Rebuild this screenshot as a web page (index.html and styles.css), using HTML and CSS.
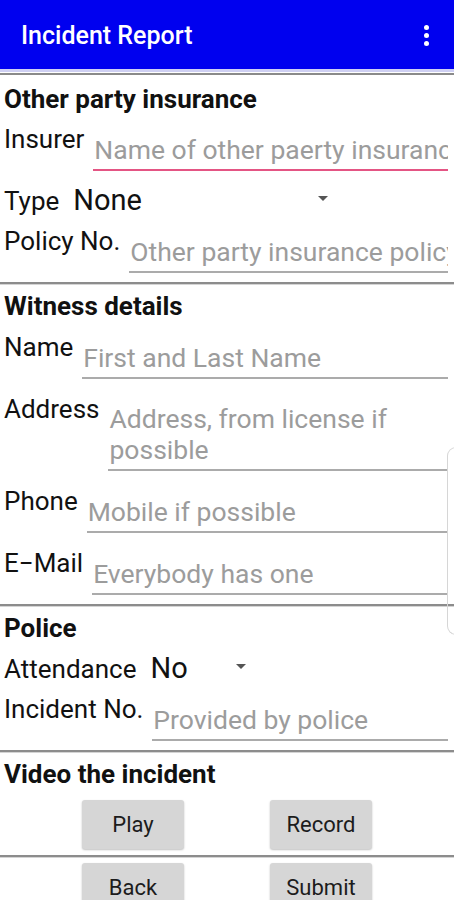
FILE: index.html
```html
<html>
	<head>
		<title>Incident Report</title>
		<meta name="viewport" content="width=device-width, initial-scale=1">
		<link rel="stylesheet" href="styles.css">
	</head>
	<body>

		<div class="appBar">
			<div class="appTitle">Incident Report</div>
			<div class="overflowMenu">
				<span class="dot"></span>
				<span class="dot"></span>
				<span class="dot"></span>
			</div>
		</div>
		<div class="barEdge"></div>

		<div class="section">
			<div class="heading">Other party insurance</div>
			<div class="row">
				<span class="label">Insurer</span>
				<input class="field focused" type="text" placeholder="Name of other paerty insurance company">
			</div>
			<div class="row spinRow">
				<span class="label">Type</span>
				<div class="spinner typeSpin">
					<span class="spinValue">None</span>
					<span class="arrow"></span>
				</div>
			</div>
			<div class="row last">
				<span class="label">Policy No.</span>
				<input class="field" type="text" placeholder="Other party insurance policy number">
			</div>
		</div>
		<div class="rule"></div>

		<div class="section">
			<div class="heading">Witness details</div>
			<div class="row">
				<span class="label">Name</span>
				<input class="field" type="text" placeholder="First and Last Name">
			</div>
			<div class="row">
				<span class="label">Address</span>
				<textarea class="field area" rows="2" placeholder="Address, from license if possible"></textarea>
			</div>
			<div class="row">
				<span class="label">Phone</span>
				<input class="field" type="text" placeholder="Mobile if possible">
			</div>
			<div class="row last">
				<span class="label">E&minus;Mail</span>
				<input class="field" type="text" placeholder="Everybody has one">
			</div>
		</div>
		<div class="rule"></div>

		<div class="section">
			<div class="heading">Police</div>
			<div class="row spinRow">
				<span class="label">Attendance</span>
				<div class="spinner attendSpin">
					<span class="spinValue">No</span>
					<span class="arrow"></span>
				</div>
			</div>
			<div class="row last">
				<span class="label">Incident No.</span>
				<input class="field" type="text" placeholder="Provided by police">
			</div>
		</div>
		<div class="rule"></div>

		<div class="section">
			<div class="heading videoHeading">Video the incident</div>
			<div class="btnRow">
				<button class="btn">Play</button>
				<button class="btn">Record</button>
			</div>
		</div>
		<div class="rule btnRule"></div>

		<div class="section">
			<div class="btnRow">
				<button class="btn">Back</button>
				<button class="btn">Submit</button>
			</div>
		</div>

		<div class="scrollHint"></div>
	</body>
</html>
```

FILE: styles.css
```css
body
{
	margin: 0;
	font-family: Roboto, "Noto Sans", sans-serif;
	color: #111;
	background-color: white;
}

.appBar
{
	height: 69px;
	background-color: #0000ef;
	color: white;
	display: flex;
	align-items: center;
	justify-content: space-between;
	padding: 0 21px;
}

.appTitle
{
	font-size: 25px;
	font-weight: 500;
	margin-top: 2px;
}

.overflowMenu
{
	display: flex;
	flex-direction: column;
	gap: 3px;
	margin-right: 4px;
	margin-top: 2px;
}

.dot
{
	display: block;
	width: 5px;
	height: 5px;
	border-radius: 100%;
	background-color: white;
}

.barEdge
{
	height: 1px;
	border-top: 3px solid #cfd0f3;
	border-bottom: 2px solid #8a8a8a;
}

.section
{
	padding-left: 4px;
}

.heading
{
	font-size: 26px;
	font-weight: bold;
	line-height: 32px;
	margin-top: 6px;
	margin-bottom: 10px;
}

.barEdge + .section .heading
{
	margin-top: 8px;
	margin-bottom: 9px;
}

.row
{
	display: flex;
	align-items: flex-start;
	margin-bottom: 15px;
}

.row.last
{
	margin-bottom: 9px;
}

.label
{
	font-size: 26px;
	line-height: 30px;
	padding-right: 9px;
	white-space: nowrap;
}

.field
{
	flex: 1;
	min-width: 0;
	box-sizing: border-box;
	margin: 9px 6px 0 0;
	padding: 0 0 4px 1px;
	height: 38px;
	border: none;
	border-bottom: 2px solid #ababab;
	border-radius: 0;
	outline: none;
	background: transparent;
	font-family: Roboto, "Noto Sans", sans-serif;
	font-size: 26.5px;
	line-height: 32px;
	color: #111;
}

.field::placeholder
{
	color: #9c9c9c;
}

.field.focused
{
	border-bottom-color: #e45584;
}

.area
{
	height: 68px;
	line-height: 31px;
	resize: none;
	overflow: hidden;
}

.spinRow
{
	height: 40px;
	margin-bottom: 0;
}

.spinner
{
	display: flex;
	align-items: flex-start;
	justify-content: space-between;
	margin-left: 5px;
	padding-right: 12px;
	box-sizing: border-box;
}

.typeSpin
{
	width: 267px;
}

.attendSpin
{
	width: 108px;
}

.spinValue
{
	font-size: 29px;
	line-height: 30px;
	margin-top: -1px;
}

.arrow
{
	margin-top: 10px;
	width: 0;
	height: 0;
	border-left: 5px solid transparent;
	border-right: 5px solid transparent;
	border-top: 5px solid #555;
}

.rule
{
	height: 2px;
	background-color: #8c8c8c;
	box-shadow: 0 1px 0 #d4d4d4;
}

.videoHeading
{
	margin-bottom: 10px;
}

.btnRow
{
	display: flex;
	gap: 86px;
	padding-left: 78px;
}

.btn
{
	width: 102px;
	height: 49px;
	border: none;
	border-radius: 3px;
	background-color: #d6d6d6;
	box-shadow: 0 1px 2px rgba(0, 0, 0, 0.25);
	font-family: Roboto, "Noto Sans", sans-serif;
	font-size: 22px;
	color: #1c1c1c;
	padding: 0;
}

.btnRule
{
	margin: 6px 0;
}

.scrollHint
{
	position: absolute;
	right: -2px;
	top: 447px;
	width: 7px;
	height: 186px;
	border: 1px solid #d6d6d6;
	border-radius: 9px 0 0 9px;
}
```
